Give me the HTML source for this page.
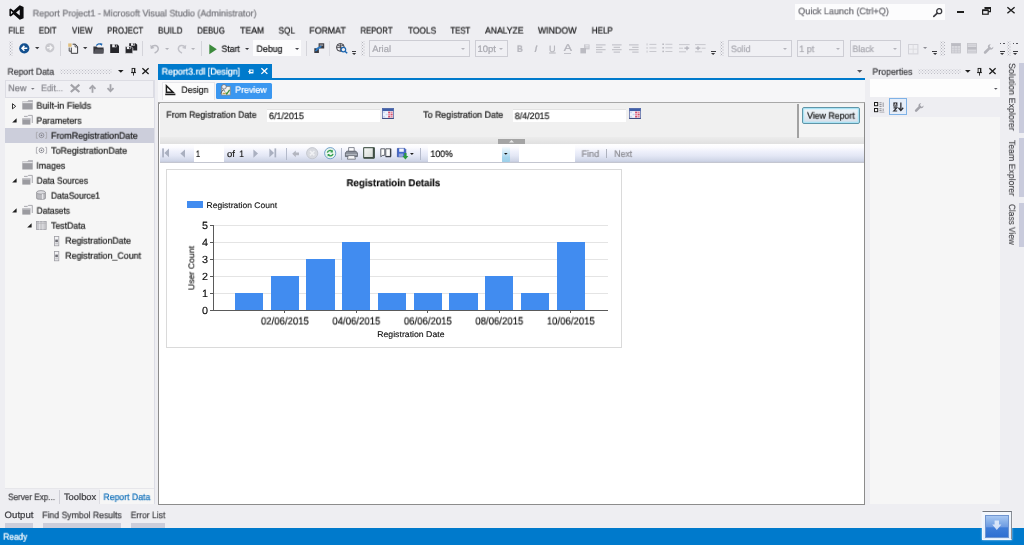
<!DOCTYPE html>
<html><head><meta charset="utf-8"><title>Report Project1 - Microsoft Visual Studio (Administrator)</title>
<style>
*{box-sizing:border-box;margin:0;padding:0}
html,body{width:1024px;height:545px;overflow:hidden;background:#eeeef2;font-family:"Liberation Sans",sans-serif;font-size:9px;color:#1e1e1e}
.a{position:absolute}
.t{position:absolute;white-space:nowrap;line-height:14px;height:14px;transform-origin:0 50%;will-change:transform;text-rendering:geometricPrecision;-webkit-text-stroke:0.24px}
svg{position:absolute;overflow:visible}
</style></head><body>
<!-- ===== title bar ===== -->
<svg style="left:8.8px;top:5px" width="15" height="15" viewBox="0 0 15.7 16"><path d="M11.3 0.2 L15.4 2 V14 L11.3 15.8 L4.7 9.8 L1.7 12.2 L0.3 11.5 V4.5 L1.7 3.8 L4.7 6.2 Z M11.3 4.7 L7.4 8 L11.3 11.3 Z M1.9 6.2 V9.8 L3.9 8 Z" fill="#0b0b0d" fill-rule="evenodd"/></svg>
<div class="t" style="left:32px;top:6px;font-size:9.3px;color:#77777d;transform:translate(0.70px,0.40px) scaleX(0.9697);">Report Project1 - Microsoft Visual Studio (Administrator)</div>
<div class="a" style="left:794.5px;top:3.5px;width:150px;height:16px;background:#fcfcfd;"></div>
<div class="t" style="left:798px;top:4px;font-size:9.3px;color:#6b6b72;transform:translate(0.20px,0.30px) scaleX(0.9768);">Quick Launch (Ctrl+Q)</div>
<svg style="left:932.5px;top:7.5px" width="10" height="9" viewBox="0 0 10 9"><circle cx="6.2" cy="3.2" r="2.5" fill="none" stroke="#3b3b40" stroke-width="1.3"/><path d="M4.3 5.1L0.8 8.4" stroke="#3b3b40" stroke-width="1.7" stroke-linecap="round"/></svg>
<div class="a" style="left:957px;top:11.2px;width:7.2px;height:2.1px;background:#1e1e1e;"></div>
<svg style="left:981.5px;top:7px" width="9" height="8" viewBox="0 0 9 8"><path d="M2.6 0.6H8.4V4.6H6.2" fill="none" stroke="#1e1e1e" stroke-width="1.2"/><path d="M2.6 1.1H8.4" stroke="#1e1e1e" stroke-width="1.8"/><rect x="0.6" y="3" width="5.6" height="4.2" fill="none" stroke="#1e1e1e" stroke-width="1.2"/><path d="M0.6 3.3H6.2" stroke="#1e1e1e" stroke-width="1.6"/></svg>
<svg style="left:1007.3px;top:7.3px" width="8" height="6.6" viewBox="0 0 8 6.6"><path d="M0.4 0.3L7.6 6.3M7.6 0.3L0.4 6.3" stroke="#1e1e1e" stroke-width="1.4"/></svg>
<!-- ===== menu ===== -->
<div class="t" style="left:8px;top:23px;font-size:9.3px;color:#202022;transform:translate(0.50px,0.60px) scaleX(0.8045);">FILE</div>
<div class="t" style="left:38px;top:23px;font-size:9.3px;color:#202022;transform:translate(0.80px,0.60px) scaleX(0.8354);">EDIT</div>
<div class="t" style="left:71px;top:23px;font-size:9.3px;color:#202022;transform:translate(0.90px,0.60px) scaleX(0.8626);">VIEW</div>
<div class="t" style="left:107px;top:23px;font-size:9.3px;color:#202022;transform:translate(0.20px,0.60px) scaleX(0.8274);">PROJECT</div>
<div class="t" style="left:158px;top:23px;font-size:9.3px;color:#202022;transform:translate(0.00px,0.60px) scaleX(0.8945);">BUILD</div>
<div class="t" style="left:197px;top:23px;font-size:9.3px;color:#202022;transform:translate(0.30px,0.60px) scaleX(0.8348);">DEBUG</div>
<div class="t" style="left:240px;top:23px;font-size:9.3px;color:#202022;transform:translate(0.00px,0.60px) scaleX(0.9370);">TEAM</div>
<div class="t" style="left:278px;top:23px;font-size:9.3px;color:#202022;transform:translate(0.50px,0.60px) scaleX(0.8813);">SQL</div>
<div class="t" style="left:309px;top:23px;font-size:9.3px;color:#202022;transform:translate(0.30px,0.60px) scaleX(0.9439);">FORMAT</div>
<div class="t" style="left:360px;top:23px;font-size:9.3px;color:#202022;transform:translate(0.50px,0.60px) scaleX(0.8295);">REPORT</div>
<div class="t" style="left:408px;top:23px;font-size:9.3px;color:#202022;transform:translate(0.00px,0.60px) scaleX(0.8961);">TOOLS</div>
<div class="t" style="left:450px;top:23px;font-size:9.3px;color:#202022;transform:translate(0.40px,0.60px) scaleX(0.8331);">TEST</div>
<div class="t" style="left:485px;top:23px;font-size:9.3px;color:#202022;transform:translate(0.00px,0.60px) scaleX(0.9235);">ANALYZE</div>
<div class="t" style="left:537px;top:23px;font-size:9.3px;color:#202022;transform:translate(0.90px,0.60px) scaleX(0.9486);">WINDOW</div>
<div class="t" style="left:591px;top:23px;font-size:9.3px;color:#202022;transform:translate(0.70px,0.60px) scaleX(0.8684);">HELP</div>
<!-- ===== main toolbar ===== -->
<div class="a" style="left:8.8px;top:41px;width:4.6px;height:15px;background-image:radial-gradient(circle,#b4b4bc 0.55px,transparent 0.8px),radial-gradient(circle,#b4b4bc 0.55px,transparent 0.8px);background-size:3px 3px;background-position:0 0,1.5px 1.5px"></div>
<svg style="left:18.5px;top:42.7px" width="10.6" height="10.6" viewBox="0 0 10.6 10.6"><circle cx="5.3" cy="5.3" r="5.1" fill="#13508f"/><path d="M8.3 5.3H3.2M5.4 2.9L3 5.3L5.4 7.7" fill="none" stroke="#fff" stroke-width="1.5"/></svg>
<svg style="left:34.8px;top:47.2px" width="4.4" height="2.2" viewBox="0 0 4.4 2.2"><path d="M0 0H4.4L2.2 2.2Z" fill="#3a3a3e"/></svg>
<svg style="left:44.6px;top:43.3px" width="9.6" height="9.6" viewBox="0 0 9.6 9.6"><circle cx="4.8" cy="4.8" r="4.6" fill="#c9c9ce"/><path d="M2 4.8H6.7M4.7 2.6L6.9 4.8L4.7 7" fill="none" stroke="#f4f4f6" stroke-width="1.4"/></svg>
<div class="a" style="left:60.3px;top:40.8px;width:1px;height:14.8px;background:#d4d4da;"></div>
<svg style="left:67.5px;top:43px" width="10.5" height="11" viewBox="0 0 10.5 11"><rect x="0.2" y="0.4" width="3.4" height="3.4" fill="#e2c07e"/><path d="M4.6 1.2H7.3L9.6 3.6V10.3H3.3V4.6" fill="#f4f4f6" stroke="#3c3c40" stroke-width="1"/><path d="M1.2 4.6V8.2H3.2" fill="none" stroke="#3c3c40" stroke-width="0.9"/><path d="M7.1 1.3V3.9H9.5" fill="none" stroke="#3c3c40" stroke-width="0.8"/></svg>
<svg style="left:83.4px;top:47.2px" width="4.4" height="2.2" viewBox="0 0 4.4 2.2"><path d="M0 0H4.4L2.2 2.2Z" fill="#3a3a3e"/></svg>
<svg style="left:93px;top:43px" width="11.2" height="11" viewBox="0 0 11.2 11"><path d="M0.4 3.4H3.6L4.6 4.6H10.6V10.6H0.4Z" fill="#34343a"/><path d="M2.2 6.3H10.9L9.6 10.6H0.6Z" fill="#55555c"/><path d="M3.4 2.6C4.6 0.6 6.8 0.4 8.4 1.6" fill="none" stroke="#1c66b2" stroke-width="1.3"/><path d="M6.9 0.1L9.6 0.7L8.5 3.1Z" fill="#1c66b2"/></svg>
<svg style="left:110px;top:44.2px" width="9.2" height="9.2" viewBox="0 0 9.2 9.2"><path d="M0.2 0.2H7.2L9 2V9H0.2Z" fill="#26262b"/><rect x="2.2" y="0.2" width="4.3" height="3.1" fill="#eeeef2"/><rect x="4.8" y="0.6" width="1.2" height="2.2" fill="#26262b"/></svg>
<svg style="left:125.4px;top:43.3px" width="12.4" height="10.6" viewBox="0 0 12.4 10.6"><path d="M4.2 0.2H10.6L12.2 1.8V7.6H4.2Z" fill="#26262b"/><rect x="6" y="0.2" width="3.8" height="2.5" fill="#eeeef2"/><rect x="8.3" y="0.5" width="1" height="1.8" fill="#26262b"/><path d="M0.2 3.6H6.2L7.8 5.2V10.4H0.2Z" fill="#26262b" stroke="#eeeef2" stroke-width="0.7"/><rect x="1.9" y="3.8" width="3.6" height="2.3" fill="#eeeef2"/><rect x="4" y="4.1" width="1" height="1.6" fill="#26262b"/></svg>
<div class="a" style="left:142.2px;top:40.8px;width:1px;height:14.8px;background:#d4d4da;"></div>
<svg style="left:150px;top:43.8px" width="9.6" height="9.6" viewBox="0 0 9.6 9.6"><path d="M1.2 3.6C3 0.6 7.6 0.8 8.2 4.2C8.5 6.4 6.6 8.2 4.6 9" fill="none" stroke="#b9b9c0" stroke-width="1.5"/><path d="M0.3 0.7L0.8 5L4.6 3.9Z" fill="#b9b9c0"/></svg>
<svg style="left:164.9px;top:47.75px" width="4.2" height="2.1" viewBox="0 0 4.2 2.1"><path d="M0 0H4.2L2.1 2.1Z" fill="#b4b4bb"/></svg>
<svg style="left:176.6px;top:43.8px" width="9.6" height="9.6" viewBox="0 0 9.6 9.6"><path d="M8.4 3.6C6.6 0.6 2 0.8 1.4 4.2C1.1 6.4 3 8.2 5 9" fill="none" stroke="#c3c3ca" stroke-width="1.5"/><path d="M9.3 0.7L8.8 5L5 3.9Z" fill="#c3c3ca"/></svg>
<svg style="left:190.9px;top:47.75px" width="4.2" height="2.1" viewBox="0 0 4.2 2.1"><path d="M0 0H4.2L2.1 2.1Z" fill="#b4b4bb"/></svg>
<div class="a" style="left:200.7px;top:40.8px;width:1px;height:14.8px;background:#d4d4da;"></div>
<svg style="left:209px;top:43.6px" width="8" height="10.4" viewBox="0 0 8 10.4"><path d="M0.3 0.2L7.8 5.2L0.3 10.2Z" fill="#3c8a3c"/></svg>
<div class="t" style="left:221px;top:41px;font-size:9.3px;color:#202022;transform:translate(0.50px,0.90px) scaleX(0.9317);">Start</div>
<svg style="left:244.7px;top:47.75px" width="4.2" height="2.1" viewBox="0 0 4.2 2.1"><path d="M0 0H4.2L2.1 2.1Z" fill="#3a3a3e"/></svg>
<div class="a" style="left:253px;top:40px;width:48px;height:16.4px;background:#fcfcfd;"></div>
<div class="t" style="left:256px;top:41px;font-size:9.3px;color:#202022;transform:translate(0.50px,0.90px) scaleX(0.9487);">Debug</div>
<svg style="left:294.7px;top:47.75px" width="4.2" height="2.1" viewBox="0 0 4.2 2.1"><path d="M0 0H4.2L2.1 2.1Z" fill="#4a4a50"/></svg>
<div class="a" style="left:305.6px;top:40.8px;width:1px;height:14.8px;background:#d4d4da;"></div>
<svg style="left:314px;top:43px" width="10.5" height="10.5" viewBox="0 0 10.5 10.5"><rect x="4.6" y="0.3" width="5.6" height="5.2" fill="#3a3a40"/><rect x="5.6" y="1.6" width="3.6" height="0.9" fill="#d8d8de"/><rect x="0.3" y="5.2" width="4.6" height="4.8" fill="#3a3a40"/><path d="M2 6.2L7.4 3.2" stroke="#2f7ac2" stroke-width="1.6"/><path d="M1.4 8L4.4 5.6" stroke="#2f7ac2" stroke-width="1.4"/></svg>
<div class="a" style="left:329px;top:40.8px;width:1px;height:14.8px;background:#dcdce2;"></div>
<svg style="left:335.5px;top:43px" width="11.6" height="10.6" viewBox="0 0 11.6 10.6"><circle cx="4.4" cy="4.4" r="3.9" fill="#e8e8ee" stroke="#3a3a40" stroke-width="1"/><path d="M0.6 4.4H8.2M4.4 0.6V8.2M1.6 2.2C3.4 3.2 5.4 3.2 7.2 2.2" fill="none" stroke="#3a3a40" stroke-width="0.8"/><circle cx="7.4" cy="6.6" r="2.3" fill="#eeeef2" stroke="#1c66b2" stroke-width="1.2"/><path d="M9 8.3L11.2 10.3" stroke="#1c66b2" stroke-width="1.5"/></svg>
<div class="a" style="left:351.6px;top:50.6px;width:4.8px;height:1px;background:#3a3a3e;"></div>
<svg style="left:351.9px;top:52.55px" width="4.2" height="2.1" viewBox="0 0 4.2 2.1"><path d="M0 0H4.2L2.1 2.1Z" fill="#3a3a3e"/></svg>
<div class="a" style="left:360.6px;top:41px;width:4px;height:15px;background-image:radial-gradient(circle,#b4b4bc 0.55px,transparent 0.8px),radial-gradient(circle,#b4b4bc 0.55px,transparent 0.8px);background-size:3px 3px;background-position:0 0,1.5px 1.5px"></div>
<div class="a" style="left:369.3px;top:40.4px;width:100.4px;height:16.4px;background:#f0f0f4;border:1px solid #cdcdd4"></div><div class="t" style="left:372px;top:42px;font-size:9.3px;color:#a9a9b0;transform:translate(0.20px,0.10px) scaleX(1.0102);">Arial</div><svg style="left:461.2px;top:47.8px" width="4" height="2" viewBox="0 0 4 2"><path d="M0 0H4L2 2Z" fill="#b4b4bb"/></svg>
<div class="a" style="left:475px;top:40.4px;width:32.6px;height:16.4px;background:#f0f0f4;border:1px solid #cdcdd4"></div><div class="t" style="left:477px;top:42px;font-size:9.3px;color:#a9a9b0;transform:translate(0.50px,0.10px) scaleX(1.0216);">10pt</div><svg style="left:499.1px;top:47.8px" width="4" height="2" viewBox="0 0 4 2"><path d="M0 0H4L2 2Z" fill="#b4b4bb"/></svg>
<div class="t" style="left:517px;top:41px;font-size:9.4px;color:#b3b3ba;font-weight:700;transform:translate(0.00px,0.90px) scaleX(0.8553);">B</div>
<div class="t" style="left:534px;top:41px;font-size:9.4px;color:#b3b3ba;transform:translate(0.30px,0.90px) scaleX(1.2263);font-style:italic;">I</div>
<div class="t" style="left:549px;top:41px;font-size:9px;color:#b3b3ba;transform:translate(0.10px,0.50px) scaleX(1.0154);text-decoration:underline;">U</div>
<div class="t" style="left:563px;top:42px;font-size:10px;color:#b3b3ba;transform:translate(0.70px,0.30px) scaleX(1.2290);">A</div>
<div class="a" style="left:564.4px;top:53.2px;width:6.8px;height:1.3px;background:#c2c2c9;"></div>
<svg style="left:579.6px;top:43.6px" width="10" height="10" viewBox="0 0 10 10"><rect x="4" y="0.4" width="5.6" height="5" fill="#c9c9cf"/><rect x="0.4" y="4" width="5.6" height="5.4" fill="#bbbbc2"/><path d="M5.4 1.6H8.6M5.4 3H8.6" stroke="#eeeef2" stroke-width="0.7"/></svg>
<svg style="left:595.6px;top:43.6px" width="10" height="10" viewBox="0 0 10 10"><rect x="0" y="0.4" width="9.6" height="1" fill="#bcbcc3"/><rect x="0" y="2.8" width="6.4" height="1" fill="#bcbcc3"/><rect x="0" y="5.2" width="9.6" height="1" fill="#bcbcc3"/><rect x="0" y="7.6" width="6.4" height="1" fill="#bcbcc3"/></svg>
<svg style="left:612.2px;top:43.6px" width="10" height="10" viewBox="0 0 10 10"><rect x="0" y="0.4" width="9.6" height="1" fill="#bcbcc3"/><rect x="1.6" y="2.8" width="6.4" height="1" fill="#bcbcc3"/><rect x="0" y="5.2" width="9.6" height="1" fill="#bcbcc3"/><rect x="1.6" y="7.6" width="6.4" height="1" fill="#bcbcc3"/></svg>
<svg style="left:628.6px;top:43.6px" width="10" height="10" viewBox="0 0 10 10"><rect x="0" y="0.4" width="9.6" height="1" fill="#bcbcc3"/><rect x="3.2" y="2.8" width="6.4" height="1" fill="#bcbcc3"/><rect x="0" y="5.2" width="9.6" height="1" fill="#bcbcc3"/><rect x="3.2" y="7.6" width="6.4" height="1" fill="#bcbcc3"/></svg>
<svg style="left:646px;top:43.4px" width="10.6" height="10.6" viewBox="0 0 10.6 10.6"><rect x="0.6" y="0.4" width="0.9" height="2" fill="#c4c4ca"/><rect x="3.4" y="0.9" width="7" height="0.9" fill="#c4c4ca"/><rect x="0.6" y="4" width="0.9" height="2" fill="#c4c4ca"/><rect x="3.4" y="4.5" width="7" height="0.9" fill="#c4c4ca"/><rect x="0.6" y="7.6" width="0.9" height="2" fill="#c4c4ca"/><rect x="3.4" y="8.1" width="7" height="0.9" fill="#c4c4ca"/></svg>
<svg style="left:662px;top:43.4px" width="10.6" height="10.6" viewBox="0 0 10.6 10.6"><rect x="0.4" y="0.5" width="1.5" height="1.5" fill="#b4b4bb"/><rect x="3.4" y="0.8" width="7" height="0.9" fill="#c4c4ca"/><rect x="0.4" y="4.1" width="1.5" height="1.5" fill="#b4b4bb"/><rect x="3.4" y="4.4" width="7" height="0.9" fill="#c4c4ca"/><rect x="0.4" y="7.7" width="1.5" height="1.5" fill="#b4b4bb"/><rect x="3.4" y="8" width="7" height="0.9" fill="#c4c4ca"/></svg>
<svg style="left:679.4px;top:44.4px" width="11" height="9" viewBox="0 0 11 9"><path d="M0 0.6H10.6M0 7.8H7" stroke="#c4c4ca" stroke-width="0.9"/><path d="M0 4.2H4" stroke="#c4c4ca" stroke-width="0.9"/><path d="M5.4 4.2H10.2M8 2.2V6.2" stroke="#b0b0b8" stroke-width="1.2"/></svg>
<svg style="left:694.6px;top:44.4px" width="11" height="9" viewBox="0 0 11 9"><path d="M0 0.6H10.6M0 7.8H7" stroke="#c4c4ca" stroke-width="0.9"/><path d="M6.6 4.2H10.6" stroke="#c4c4ca" stroke-width="0.9"/><path d="M0.6 4.2H5.4M3 2.2V6.2" stroke="#b0b0b8" stroke-width="1.2"/></svg>
<div class="a" style="left:711px;top:51px;width:4.8px;height:1px;background:#3a3a3e;"></div>
<svg style="left:711.3px;top:52.95px" width="4.2" height="2.1" viewBox="0 0 4.2 2.1"><path d="M0 0H4.2L2.1 2.1Z" fill="#3a3a3e"/></svg>
<div class="a" style="left:719.6px;top:41px;width:4px;height:15px;background-image:radial-gradient(circle,#b4b4bc 0.55px,transparent 0.8px),radial-gradient(circle,#b4b4bc 0.55px,transparent 0.8px);background-size:3px 3px;background-position:0 0,1.5px 1.5px"></div>
<div class="a" style="left:728px;top:40.4px;width:63.6px;height:16.4px;background:#f0f0f4;border:1px solid #cdcdd4"></div><div class="t" style="left:730px;top:42px;font-size:9.3px;color:#a9a9b0;transform:translate(0.90px,0.10px) scaleX(0.9474);">Solid</div><svg style="left:783.1px;top:47.8px" width="4" height="2" viewBox="0 0 4 2"><path d="M0 0H4L2 2Z" fill="#b4b4bb"/></svg>
<div class="a" style="left:796.6px;top:40.4px;width:47.6px;height:16.4px;background:#f0f0f4;border:1px solid #cdcdd4"></div><div class="t" style="left:799px;top:42px;font-size:9.3px;color:#a9a9b0;transform:translate(0.30px,0.10px) scaleX(0.9539);">1 pt</div><svg style="left:835.7px;top:47.8px" width="4" height="2" viewBox="0 0 4 2"><path d="M0 0H4L2 2Z" fill="#b4b4bb"/></svg>
<div class="a" style="left:849.6px;top:40.4px;width:51.4px;height:16.4px;background:#f0f0f4;border:1px solid #cdcdd4"></div><div class="t" style="left:852px;top:42px;font-size:9.3px;color:#a9a9b0;transform:translate(0.50px,0.10px) scaleX(0.9413);">Black</div><svg style="left:892.5px;top:47.8px" width="4" height="2" viewBox="0 0 4 2"><path d="M0 0H4L2 2Z" fill="#b4b4bb"/></svg>
<svg style="left:907.6px;top:43.6px" width="10.4" height="10.4" viewBox="0 0 10.4 10.4"><rect x="0.5" y="0.5" width="9.4" height="9.4" fill="none" stroke="#d2d2d8" stroke-width="1"/><path d="M5.2 0.5V9.9M0.5 5.2H9.9" stroke="#dadae0" stroke-width="0.9"/></svg>
<svg style="left:923.3px;top:47.35px" width="4.2" height="2.1" viewBox="0 0 4.2 2.1"><path d="M0 0H4.2L2.1 2.1Z" fill="#8e8e96"/></svg>
<div class="a" style="left:932.4px;top:51px;width:4.8px;height:1px;background:#3a3a3e;"></div>
<svg style="left:932.7px;top:52.95px" width="4.2" height="2.1" viewBox="0 0 4.2 2.1"><path d="M0 0H4.2L2.1 2.1Z" fill="#3a3a3e"/></svg>
<div class="a" style="left:939.6px;top:41px;width:5px;height:15px;background-image:radial-gradient(circle,#b4b4bc 0.55px,transparent 0.8px),radial-gradient(circle,#b4b4bc 0.55px,transparent 0.8px);background-size:3px 3px;background-position:0 0,1.5px 1.5px"></div>
<svg style="left:950.6px;top:43.4px" width="10" height="10.4" viewBox="0 0 10 10.4"><rect x="0.4" y="0.4" width="9.2" height="9.6" fill="#d9d9de" stroke="#c3c3c9" stroke-width="0.8"/><rect x="0.4" y="0.4" width="9.2" height="2.6" fill="#bcbcc3"/><path d="M3.4 3V10M6.6 3V10M0.4 5.4H9.6M0.4 7.8H9.6" stroke="#c6c6cc" stroke-width="0.6"/></svg>
<svg style="left:966.8px;top:43.4px" width="10" height="10.4" viewBox="0 0 10 10.4"><rect x="0.4" y="0.4" width="9.2" height="9.6" fill="#d9d9de" stroke="#c3c3c9" stroke-width="0.8"/><rect x="0.4" y="4" width="9.2" height="2.6" fill="#bcbcc3"/><path d="M0.4 2.2H9.6M0.4 8.4H9.6" stroke="#c6c6cc" stroke-width="0.6"/></svg>
<svg style="left:984px;top:43.8px" width="9.6" height="9.6" viewBox="0 0 9.6 9.6"><path d="M1.1 8.5L5 4.6" stroke="#b4b4bb" stroke-width="2.6" stroke-linecap="round"/><path d="M6.8 0.3C4.8 0 3.4 1.8 4 3.6L6 5.6C7.8 6.2 9.6 4.8 9.3 2.8L7.4 4.2L5.4 2.2Z" fill="#b4b4bb"/></svg>
<div class="a" style="left:1000px;top:42.6px;width:1.2px;height:1.6px;background:#55555c;"></div>
<div class="a" style="left:1003.4px;top:42.6px;width:1.2px;height:1.6px;background:#55555c;"></div>
<div class="a" style="left:999.8px;top:51px;width:4.8px;height:1px;background:#3a3a3e;"></div>
<svg style="left:1000.1px;top:52.95px" width="4.2" height="2.1" viewBox="0 0 4.2 2.1"><path d="M0 0H4.2L2.1 2.1Z" fill="#3a3a3e"/></svg>
<div class="a" style="left:1013px;top:42.6px;width:1.2px;height:1.6px;background:#55555c;"></div>
<div class="a" style="left:1016.4px;top:42.6px;width:1.2px;height:1.6px;background:#55555c;"></div>
<div class="a" style="left:1012.8px;top:51px;width:4.8px;height:1px;background:#3a3a3e;"></div>
<svg style="left:1013.1px;top:52.95px" width="4.2" height="2.1" viewBox="0 0 4.2 2.1"><path d="M0 0H4.2L2.1 2.1Z" fill="#3a3a3e"/></svg>
<div class="a" style="left:1007px;top:41px;width:4.4px;height:15px;background-image:radial-gradient(circle,#b4b4bc 0.55px,transparent 0.8px),radial-gradient(circle,#b4b4bc 0.55px,transparent 0.8px);background-size:3px 3px;background-position:0 0,1.5px 1.5px"></div>
<!-- ===== Report Data tool window ===== -->
<div class="a" style="left:4.7px;top:79.5px;width:149.5px;height:424.6px;background:#f6f6f6;"></div>
<div class="a" style="left:154.2px;top:79.5px;width:1px;height:424.6px;background:#dcdde6;"></div>
<div class="t" style="left:7px;top:64px;font-size:9.3px;color:#3e3e42;transform:translate(0.50px,0.70px) scaleX(0.9294);">Report Data</div>
<div class="a" style="left:60px;top:69px;width:52px;height:5.4px;background-image:radial-gradient(circle,#c0c0c8 0.55px,transparent 0.8px),radial-gradient(circle,#c0c0c8 0.55px,transparent 0.8px);background-size:3px 3px;background-position:0 0,1.5px 1.5px"></div>
<svg style="left:117.9px;top:69.8px" width="5.6" height="2.8" viewBox="0 0 5.6 2.8"><path d="M0 0H5.6L2.8 2.8Z" fill="#1e1e1e"/></svg>
<svg style="left:130.8px;top:67.8px" width="5" height="7.8" viewBox="0 0 5 7.8"><rect x="1.1" y="0.4" width="2.8" height="4" fill="#f0f0f2" stroke="#1e1e1e" stroke-width="0.9"/><rect x="3" y="0.4" width="1" height="4" fill="#1e1e1e"/><path d="M0 4.6H5" stroke="#1e1e1e" stroke-width="0.9"/><path d="M2.5 4.8V7.6" stroke="#1e1e1e" stroke-width="0.9"/></svg>
<svg style="left:141.9px;top:68px" width="7" height="6.4" viewBox="0 0 7 6.4"><path d="M0.4 0.3L6.6 6.1M6.6 0.3L0.4 6.1" stroke="#1e1e1e" stroke-width="1.3"/></svg>
<div class="a" style="left:4.7px;top:79.5px;width:149.5px;height:18.2px;background:#f0f0f4;border:1px solid #dcdce3"></div>
<div class="t" style="left:8px;top:81px;font-size:9.3px;color:#7d7d84;transform:translate(0.30px,0.20px) scaleX(0.9673);">New</div>
<svg style="left:31px;top:87.5px" width="3.6" height="1.8" viewBox="0 0 3.6 1.8"><path d="M0 0H3.6L1.8 1.8Z" fill="#77777e"/></svg>
<div class="t" style="left:41px;top:81px;font-size:9.3px;color:#8d8d94;transform:translate(0.10px,0.20px) scaleX(0.9209);">Edit...</div>
<svg style="left:70.3px;top:84.2px" width="10.2" height="8.6" viewBox="0 0 10.2 8.6"><path d="M0.8 0.6L9.4 8M9.4 0.6L0.8 8" stroke="#a2a2a8" stroke-width="2.2"/></svg>
<svg style="left:89px;top:85px" width="7" height="8" viewBox="0 0 7 8"><path d="M3.5 1V7.8" stroke="#a6a6ac" stroke-width="1.8"/><path d="M0.5 3.8L3.5 0.8L6.5 3.8" fill="none" stroke="#a6a6ac" stroke-width="1.8"/></svg>
<svg style="left:106.7px;top:83.6px" width="7" height="8" viewBox="0 0 7 8"><path d="M3.5 0.2V7" stroke="#a6a6ac" stroke-width="1.8"/><path d="M0.5 4.2L3.5 7.2L6.5 4.2" fill="none" stroke="#a6a6ac" stroke-width="1.8"/></svg>
<div class="a" style="left:4.7px;top:128px;width:149.5px;height:14.6px;background:#cccedb;"></div>
<div class="t" style="left:36px;top:98px;font-size:9.3px;color:#1e1e1e;transform:translate(0.40px,0.70px) scaleX(0.9801);">Built-in Fields</div>
<div class="t" style="left:36px;top:113px;font-size:9.3px;color:#1e1e1e;transform:translate(0.40px,0.70px) scaleX(0.9384);">Parameters</div>
<div class="t" style="left:51px;top:128px;font-size:9.3px;color:#1e1e1e;transform:translate(0.00px,0.70px) scaleX(0.9534);">FromRegistrationDate</div>
<div class="t" style="left:51px;top:143px;font-size:9.3px;color:#1e1e1e;transform:translate(0.00px,0.70px) scaleX(0.9623);">ToRegistrationDate</div>
<div class="t" style="left:36px;top:158px;font-size:9.3px;color:#1e1e1e;transform:translate(0.40px,0.70px) scaleX(0.9475);">Images</div>
<div class="t" style="left:36px;top:173px;font-size:9.3px;color:#1e1e1e;transform:translate(0.60px,0.70px) scaleX(0.9125);">Data Sources</div>
<div class="t" style="left:51px;top:188px;font-size:9.3px;color:#1e1e1e;transform:translate(0.00px,0.70px) scaleX(0.9030);">DataSource1</div>
<div class="t" style="left:36px;top:203px;font-size:9.3px;color:#1e1e1e;transform:translate(0.60px,0.70px) scaleX(0.9100);">Datasets</div>
<div class="t" style="left:51px;top:218px;font-size:9.3px;color:#1e1e1e;transform:translate(0.00px,0.70px) scaleX(0.9400);">TestData</div>
<div class="t" style="left:65px;top:233px;font-size:9.3px;color:#1e1e1e;transform:translate(0.20px,0.70px) scaleX(0.9502);">RegistrationDate</div>
<div class="t" style="left:65px;top:248px;font-size:9.3px;color:#1e1e1e;transform:translate(0.20px,0.70px) scaleX(0.9523);">Registration_Count</div>
<svg style="left:12.4px;top:102.9px" width="4.4" height="6.6" viewBox="0 0 4.4 6.6"><path d="M0.5 0.7L3.7 3.3L0.5 5.9Z" fill="#f5f5f5" stroke="#1e1e1e" stroke-width="0.9"/></svg>
<svg style="left:12.4px;top:118px" width="5" height="5" viewBox="0 0 5 5"><path d="M4.6 0.2V4.6H0.2Z" fill="#1e1e1e"/></svg>
<svg style="left:12.4px;top:178px" width="5" height="5" viewBox="0 0 5 5"><path d="M4.6 0.2V4.6H0.2Z" fill="#1e1e1e"/></svg>
<svg style="left:12.4px;top:208px" width="5" height="5" viewBox="0 0 5 5"><path d="M4.6 0.2V4.6H0.2Z" fill="#1e1e1e"/></svg>
<svg style="left:27px;top:223px" width="5" height="5" viewBox="0 0 5 5"><path d="M4.6 0.2V4.6H0.2Z" fill="#1e1e1e"/></svg>
<svg style="left:21.6px;top:100px" width="11" height="10" viewBox="0 0 11 10"><path d="M0.3 1.5H5.4L6.6 0.2H10.7V9.4H0.3Z" fill="#9d9da2"/><path d="M0.3 1.9H10.7V3.2H0.3Z" fill="#e3e3e6"/><path d="M5.6 1.7L6.8 0.3H10.7V1.7Z" fill="#bdbdc2"/></svg>
<svg style="left:21.6px;top:115px" width="11" height="10" viewBox="0 0 11 10"><path d="M2 1.4H5.4L6.4 0.4H10.3V8" fill="#f1f1f3" stroke="#a3a3a8" stroke-width="0.9"/><path d="M0.3 3.4H8.4V9.6H0.3Z" fill="#9b9ba0"/><path d="M0.3 3.4H8.4V4.6H0.3Z" fill="#c6c6ca"/></svg>
<svg style="left:21.6px;top:160px" width="11" height="10" viewBox="0 0 11 10"><path d="M0.3 1.5H5.4L6.6 0.2H10.7V9.4H0.3Z" fill="#9d9da2"/><path d="M0.3 1.9H10.7V3.2H0.3Z" fill="#e3e3e6"/><path d="M5.6 1.7L6.8 0.3H10.7V1.7Z" fill="#bdbdc2"/></svg>
<svg style="left:21.6px;top:175px" width="11" height="10" viewBox="0 0 11 10"><path d="M2 1.4H5.4L6.4 0.4H10.3V8" fill="#f1f1f3" stroke="#a3a3a8" stroke-width="0.9"/><path d="M0.3 3.4H8.4V9.6H0.3Z" fill="#9b9ba0"/><path d="M0.3 3.4H8.4V4.6H0.3Z" fill="#c6c6ca"/></svg>
<svg style="left:21.6px;top:205px" width="11" height="10" viewBox="0 0 11 10"><path d="M2 1.4H5.4L6.4 0.4H10.3V8" fill="#f1f1f3" stroke="#a3a3a8" stroke-width="0.9"/><path d="M0.3 3.4H8.4V9.6H0.3Z" fill="#9b9ba0"/><path d="M0.3 3.4H8.4V4.6H0.3Z" fill="#c6c6ca"/></svg>
<svg style="left:36px;top:132.2px" width="11" height="6.6" viewBox="0 0 11 6.6"><path d="M1.8 0.3H0.4V6.3H1.8M9.2 0.3H10.6V6.3H9.2" fill="none" stroke="#a9a9af" stroke-width="0.9"/><circle cx="5.5" cy="3.3" r="2.4" fill="none" stroke="#8f8f96" stroke-width="0.9"/><circle cx="5.5" cy="3.3" r="0.9" fill="#7c7c84"/></svg>
<svg style="left:36px;top:147.2px" width="11" height="6.6" viewBox="0 0 11 6.6"><path d="M1.8 0.3H0.4V6.3H1.8M9.2 0.3H10.6V6.3H9.2" fill="none" stroke="#a9a9af" stroke-width="0.9"/><circle cx="5.5" cy="3.3" r="2.4" fill="none" stroke="#8f8f96" stroke-width="0.9"/><circle cx="5.5" cy="3.3" r="0.9" fill="#7c7c84"/></svg>
<svg style="left:36.3px;top:190.2px" width="10" height="10.4" viewBox="0 0 10 10.4"><path d="M0.6 2.4V8.4C0.6 9.6 9.4 9.6 9.4 8.4V2.4" fill="#b9b9be" stroke="#8e8e94" stroke-width="0.8"/><ellipse cx="5" cy="2.4" rx="4.4" ry="1.8" fill="#dcdce0" stroke="#8e8e94" stroke-width="0.8"/><path d="M6.6 4V9" stroke="#e6e6ea" stroke-width="1.4"/></svg>
<svg style="left:36.3px;top:221px" width="10.6" height="9" viewBox="0 0 10.6 9"><rect x="0.4" y="0.4" width="9.8" height="8.2" fill="#c9c9cd" stroke="#a2a2a8" stroke-width="0.8"/><path d="M3.6 0.4V8.6M6.9 0.4V8.6" stroke="#e9e9ec" stroke-width="0.8"/><path d="M0.4 2.2H10.2" stroke="#b1b1b6" stroke-width="0.8"/></svg>
<svg style="left:53.8px;top:235.9px" width="5.2" height="10.2" viewBox="0 0 5.2 10.2"><rect x="0.4" y="0.4" width="4.4" height="9.4" fill="#f2f2f4" stroke="#9d9da3" stroke-width="0.8"/><rect x="1.3" y="3.6" width="2.6" height="2.6" fill="#6e6e75"/><path d="M1.2 7.8H4" stroke="#a5a5ab" stroke-width="0.8"/></svg>
<svg style="left:53.8px;top:250.9px" width="5.2" height="10.2" viewBox="0 0 5.2 10.2"><rect x="0.4" y="0.4" width="4.4" height="9.4" fill="#f2f2f4" stroke="#9d9da3" stroke-width="0.8"/><rect x="1.3" y="3.6" width="2.6" height="2.6" fill="#6e6e75"/><path d="M1.2 7.8H4" stroke="#a5a5ab" stroke-width="0.8"/></svg>
<div class="a" style="left:4.7px;top:489px;width:95.3px;height:15.2px;background:#eeeef2;"></div>
<div class="a" style="left:4.7px;top:488.4px;width:149.5px;height:0.8px;background:#e6e6ea;"></div>
<div class="a" style="left:59.2px;top:490px;width:0.8px;height:14px;background:#cfcfd6;"></div>
<div class="a" style="left:99.4px;top:490px;width:0.8px;height:14px;background:#dcdce2;"></div>
<div class="t" style="left:8px;top:490px;font-size:9.3px;color:#3e3e42;transform:translate(0.10px,0.10px) scaleX(0.8728);">Server Exp...</div>
<div class="t" style="left:63px;top:490px;font-size:9.3px;color:#3e3e42;transform:translate(0.90px,0.10px) scaleX(1.0110);">Toolbox</div>
<div class="t" style="left:103px;top:490px;font-size:9.3px;color:#1573bb;transform:translate(0.40px,0.10px) scaleX(0.9354);">Report Data</div>
<!-- ===== document well ===== -->
<div class="a" style="left:158.2px;top:64.1px;width:113.9px;height:14px;background:#007acc;"></div>
<div class="a" style="left:158.2px;top:77.8px;width:707.2px;height:1.8px;background:#007acc;"></div>
<div class="t" style="left:161px;top:64px;font-size:9.3px;color:#ffffff;transform:translate(0.70px,0.60px) scaleX(0.9481);">Report3.rdl [Design]</div>
<svg style="left:248.4px;top:68.6px" width="6" height="5.4" viewBox="0 0 6 5.4"><rect x="2" y="1" width="3" height="3" fill="none" stroke="#fff" stroke-width="0.9"/><rect x="2" y="3" width="3" height="1" fill="#fff"/><path d="M1.6 0.4V5M0 2.7H1.6" stroke="#fff" stroke-width="0.9"/></svg>
<svg style="left:261.2px;top:68px" width="6.8" height="6.2" viewBox="0 0 6.8 6.2"><path d="M0.4 0.3L6.4 5.9M6.4 0.3L0.4 5.9" stroke="#fff" stroke-width="1.3"/></svg>
<svg style="left:856.9px;top:70.25px" width="5.4" height="2.7" viewBox="0 0 5.4 2.7"><path d="M0 0H5.4L2.7 2.7Z" fill="#55555c"/></svg>
<div class="a" style="left:158.2px;top:79.6px;width:707.2px;height:22px;background:#f6f6f8;"></div>
<div class="a" style="left:161.6px;top:82px;width:53.8px;height:18px;background:#fcfcfc;border:1px solid #e6e6ea;border-bottom:none"></div>
<svg style="left:164.7px;top:85px" width="11" height="10.2" viewBox="0 0 11 10.2"><path d="M1.4 0.8V7.2H8Z" fill="none" stroke="#1e1e1e" stroke-width="1.5"/><path d="M0.2 9.4H10.4" stroke="#1e1e1e" stroke-width="1.7"/></svg>
<div class="t" style="left:181px;top:82px;font-size:9.3px;color:#1e1e1e;transform:translate(0.40px,0.90px) scaleX(0.9325);">Design</div>
<div class="a" style="left:216px;top:83px;width:55.8px;height:16.4px;background:#3a97f0;border-radius:1.5px"></div>
<svg style="left:219.8px;top:84px" width="11" height="11.6" viewBox="0 0 11 11.6"><rect x="1.6" y="2.4" width="8.6" height="8.6" fill="#f3f3ee" stroke="#8a8a86" stroke-width="0.8"/><circle cx="4" cy="2.8" r="2.3" fill="#e8ecf2" stroke="#6b6f7a" stroke-width="0.8"/><path d="M0.6 9.6L3 5.6L5.2 7.6" fill="none" stroke="#555a66" stroke-width="0.9"/><path d="M5.6 8.6L6.8 10L9.6 6" fill="none" stroke="#3f8f3f" stroke-width="1.3"/><path d="M2.6 9.4H5.4" stroke="#c9a24a" stroke-width="1.2"/></svg>
<div class="t" style="left:235px;top:82px;font-size:9.3px;color:#ffffff;transform:translate(0.20px,0.90px) scaleX(0.9523);">Preview</div>
<div class="a" style="left:158.2px;top:102.2px;width:707.1px;height:402.5px;background:#ffffff;border:1px solid #8c8c8c;border-top:2px solid #a8a8a8"></div>
<div class="a" style="left:160.2px;top:103.4px;width:704.2px;height:34px;background:#f0f0f0;"></div>
<div class="a" style="left:160.2px;top:137.3px;width:704.2px;height:6.8px;background:linear-gradient(#ececec,#e0e0e0);"></div>
<div class="a" style="left:160.2px;top:144px;width:704.2px;height:18.6px;background:linear-gradient(#ffffff 0%,#fbfbfe 18%,#eef0fb 40%,#e3e7f5 62%,#ced4e6 90%,#b8bece 100%);"></div>
<div class="t" style="left:166px;top:107px;font-size:9.3px;color:#1e1e1e;transform:translate(0.30px,0.80px) scaleX(0.9385);">From Registration Date</div>
<div class="a" style="left:266.7px;top:108.8px;width:113px;height:13.6px;background:#ffffff;border-top:1px solid #e3e3e3"></div>
<div class="t" style="left:268px;top:109px;font-size:9.3px;color:#1e1e1e;transform:translate(0.90px,0.10px) scaleX(0.9668);">6/1/2015</div>
<svg style="left:382.3px;top:108px" width="12" height="11" viewBox="0 0 12 11"><rect x="0.4" y="0.4" width="11.2" height="10.2" fill="#f7f8fc" stroke="#5f6fa6" stroke-width="0.8"/><rect x="0.4" y="0.4" width="11.2" height="2.7" fill="#3f5fa8"/><rect x="0.4" y="9.9" width="11.2" height="0.9" fill="#2d3d74"/><rect x="1.1" y="3.6" width="2.1" height="1.7" fill="#c7d6f2"/><rect x="3.6" y="3.6" width="2.1" height="1.7" fill="#eef2fb"/><rect x="6.1" y="3.6" width="2.1" height="1.7" fill="#d4506e"/><rect x="8.6" y="3.6" width="2.1" height="1.7" fill="#e58a9e"/><rect x="1.1" y="5.7" width="2.1" height="1.7" fill="#eef2fb"/><rect x="3.6" y="5.7" width="2.1" height="1.7" fill="#c7d6f2"/><rect x="6.1" y="5.7" width="2.1" height="1.7" fill="#e58a9e"/><rect x="8.6" y="5.7" width="2.1" height="1.7" fill="#d4506e"/><rect x="1.1" y="7.8" width="2.1" height="1.7" fill="#c7d6f2"/><rect x="3.6" y="7.8" width="2.1" height="1.7" fill="#eef2fb"/><rect x="6.1" y="7.8" width="2.1" height="1.7" fill="#d4506e"/><rect x="8.6" y="7.8" width="2.1" height="1.7" fill="#e58a9e"/></svg>
<div class="t" style="left:423px;top:107px;font-size:9.3px;color:#1e1e1e;transform:translate(0.10px,0.80px) scaleX(0.9521);">To Registration Date</div>
<div class="a" style="left:512.7px;top:108.8px;width:113.6px;height:13.6px;background:#ffffff;border-top:1px solid #e3e3e3"></div>
<div class="t" style="left:514px;top:109px;font-size:9.3px;color:#1e1e1e;transform:translate(0.70px,0.10px) scaleX(0.9612);">8/4/2015</div>
<svg style="left:628.5px;top:108px" width="12" height="11" viewBox="0 0 12 11"><rect x="0.4" y="0.4" width="11.2" height="10.2" fill="#f7f8fc" stroke="#5f6fa6" stroke-width="0.8"/><rect x="0.4" y="0.4" width="11.2" height="2.7" fill="#3f5fa8"/><rect x="0.4" y="9.9" width="11.2" height="0.9" fill="#2d3d74"/><rect x="1.1" y="3.6" width="2.1" height="1.7" fill="#c7d6f2"/><rect x="3.6" y="3.6" width="2.1" height="1.7" fill="#eef2fb"/><rect x="6.1" y="3.6" width="2.1" height="1.7" fill="#d4506e"/><rect x="8.6" y="3.6" width="2.1" height="1.7" fill="#e58a9e"/><rect x="1.1" y="5.7" width="2.1" height="1.7" fill="#eef2fb"/><rect x="3.6" y="5.7" width="2.1" height="1.7" fill="#c7d6f2"/><rect x="6.1" y="5.7" width="2.1" height="1.7" fill="#e58a9e"/><rect x="8.6" y="5.7" width="2.1" height="1.7" fill="#d4506e"/><rect x="1.1" y="7.8" width="2.1" height="1.7" fill="#c7d6f2"/><rect x="3.6" y="7.8" width="2.1" height="1.7" fill="#eef2fb"/><rect x="6.1" y="7.8" width="2.1" height="1.7" fill="#d4506e"/><rect x="8.6" y="7.8" width="2.1" height="1.7" fill="#e58a9e"/></svg>
<div class="a" style="left:798.4px;top:104px;width:66px;height:33.4px;background:#f4f4f4;"></div>
<div class="a" style="left:797.2px;top:104px;width:1.4px;height:34px;background:#a2a2a2;"></div>
<div class="a" style="left:802.4px;top:106.6px;width:57.4px;height:17.4px;background:linear-gradient(#f1f6fa,#e4ebf2 50%,#d6dee8);border:1px solid #5f95a8;border-radius:2px;box-shadow:0 0 0 1.2px #a9e3f5 inset"></div>
<div class="t" style="left:807px;top:108px;font-size:9.3px;color:#1e1e1e;transform:translate(0.10px,0.70px) scaleX(0.9429);">View Report</div>
<div class="a" style="left:498px;top:139.4px;width:26.8px;height:4.2px;background:#a4a4a4;"></div>
<svg style="left:508.8px;top:140.4px" width="5" height="2.6" viewBox="0 0 5 2.6"><path d="M0 2.6L2.5 0L5 2.6Z" fill="#e8e8e8"/></svg>
<svg style="left:161.8px;top:148.4px" width="7.4" height="10" viewBox="0 0 7.4 10"><rect x="0.2" y="0.4" width="1.7" height="9" fill="#aab0c0"/><path d="M7 0.6V9.2L2.4 4.9Z" fill="#aab0c0"/></svg>
<svg style="left:179.6px;top:148.8px" width="5.4" height="9.2" viewBox="0 0 5.4 9.2"><path d="M5 0.4V8.8L0.4 4.6Z" fill="#aab0c0"/></svg>
<div class="a" style="left:193.6px;top:145.2px;width:30.6px;height:16.4px;background:#ffffff;"></div>
<div class="t" style="left:195px;top:147px;font-size:9.3px;color:#1e1e1e;transform:translate(0.90px,0.00px) scaleX(0.8121);">1</div>
<div class="t" style="left:226px;top:147px;font-size:9.3px;color:#1e1e1e;transform:translate(0.90px,0.00px) scaleX(1.0302);">of</div>
<div class="t" style="left:239px;top:147px;font-size:9.3px;color:#1e1e1e;transform:translate(0.50px,0.00px) scaleX(0.8121);">1</div>
<svg style="left:252.6px;top:148.8px" width="5.4" height="9.2" viewBox="0 0 5.4 9.2"><path d="M0.4 0.4V8.8L5 4.6Z" fill="#aab0c0"/></svg>
<svg style="left:268.6px;top:148.4px" width="7.4" height="10" viewBox="0 0 7.4 10"><rect x="5.5" y="0.4" width="1.7" height="9" fill="#aab0c0"/><path d="M0.4 0.6V9.2L5 4.9Z" fill="#aab0c0"/></svg>
<div class="a" style="left:285.6px;top:147.6px;width:1px;height:12.4px;background:#b4bacb;"></div>
<svg style="left:291.6px;top:149.6px" width="7.2" height="7.6" viewBox="0 0 7.2 7.6"><path d="M0.2 3.8L3.8 0.4V2.4H7V5.2H3.8V7.2Z" fill="#b3b6c0"/></svg>
<svg style="left:306px;top:147.4px" width="12.4" height="12.4" viewBox="0 0 12.4 12.4"><circle cx="6.2" cy="6.2" r="5.6" fill="#d8dae0" stroke="#c2c5cd" stroke-width="0.9"/><path d="M4 4L8.4 8.4M8.4 4L4 8.4" stroke="#f0f1f4" stroke-width="1.5"/></svg>
<svg style="left:323.6px;top:147.4px" width="12.4" height="12.4" viewBox="0 0 12.4 12.4"><circle cx="6.2" cy="6.2" r="5.6" fill="#e9f6ee" stroke="#6fa0c8" stroke-width="1"/><path d="M3.4 5.6C3.8 3.6 6.6 2.8 8 4.4" fill="none" stroke="#2f9b4a" stroke-width="1.4"/><path d="M8.8 2.8V5.4H6.4Z" fill="#2f9b4a"/><path d="M9 6.8C8.6 8.8 5.8 9.6 4.4 8" fill="none" stroke="#2f9b4a" stroke-width="1.4"/><path d="M3.6 9.6V7H6Z" fill="#2f9b4a"/></svg>
<div class="a" style="left:341.2px;top:147.6px;width:1px;height:12.4px;background:#b4bacb;"></div>
<svg style="left:345px;top:146.8px" width="12.8" height="12.8" viewBox="0 0 12.8 12.8"><path d="M3.6 0.6H9.2V4.6H3.6Z" fill="#fcfcfd" stroke="#6a6e78" stroke-width="0.8"/><path d="M1.8 4.2H11L12.4 6V9.6H0.4V6Z" fill="#8a8f9a" stroke="#555a64" stroke-width="0.8"/><path d="M0.8 7.4H12" stroke="#b9bdc6" stroke-width="0.9"/><path d="M3.2 8.6H9.6L10.4 12.2H2.4Z" fill="#f6f6f8" stroke="#666a74" stroke-width="0.8"/></svg>
<svg style="left:362.8px;top:147px" width="12" height="11.8" viewBox="0 0 12 11.8"><defs><linearGradient id="lg1" x1="0" y1="0" x2="1" y2="1"><stop offset="0" stop-color="#f8faf8"/><stop offset="1" stop-color="#cfd4d0"/></linearGradient></defs><rect x="0.6" y="0.6" width="10.8" height="10.6" rx="0.8" fill="url(#lg1)" stroke="#56665b" stroke-width="1.2"/><path d="M10.6 1V11M1 10.8H11" stroke="#3f4d44" stroke-width="1.6"/></svg>
<svg style="left:380.2px;top:148.2px" width="11.6" height="9.6" viewBox="0 0 11.6 9.6"><path d="M0.8 0.8H4.8V7.2L2.2 7.6L0.8 8.8Z" fill="#fdfdfd" stroke="#4e525c" stroke-width="0.9"/><path d="M5.8 0.8H10.6V8.4H5.8Z" fill="#fdfdfd" stroke="#4e525c" stroke-width="0.9"/><path d="M10.6 0.8V8.6M5.6 8.6H11" stroke="#3c4049" stroke-width="1.4"/></svg>
<svg style="left:397px;top:147.8px" width="11.4" height="11.4" viewBox="0 0 11.4 11.4"><path d="M0.4 0.4H7.8L8.8 1.4V8.8H0.4Z" fill="#4468cc" stroke="#2e4aa0" stroke-width="0.7"/><rect x="2.2" y="0.6" width="4.6" height="3.2" fill="#f2f4fb"/><rect x="1.8" y="5.6" width="4.4" height="3.2" fill="#93a4dc"/><path d="M8.4 5V9" stroke="#2c9a3e" stroke-width="2.2"/><path d="M5.4 8H11.4L8.4 11.4Z" fill="#2c9a3e"/></svg>
<svg style="left:410.2px;top:153.05px" width="3.8" height="1.9" viewBox="0 0 3.8 1.9"><path d="M0 0H3.8L1.9 1.9Z" fill="#1e1e1e"/></svg>
<div class="a" style="left:420px;top:147.6px;width:1px;height:12.4px;background:#b4bacb;"></div>
<div class="a" style="left:427.5px;top:145.2px;width:74px;height:16.4px;background:#ffffff;"></div>
<div class="t" style="left:430px;top:147px;font-size:9.3px;color:#1e1e1e;transform:translate(0.50px,0.00px) scaleX(0.9377);">100%</div>
<div class="a" style="left:501.5px;top:146.6px;width:8.6px;height:15.4px;background:linear-gradient(#f6fbfe 0%,#cfe9f7 35%,#a6d6ee 70%,#9ccfe9 100%);border-radius:1px"></div>
<svg style="left:503.8px;top:152.7px" width="3.6" height="1.8" viewBox="0 0 3.6 1.8"><path d="M0 0H3.6L1.8 1.8Z" fill="#111111"/></svg>
<div class="a" style="left:518.5px;top:145.2px;width:56.8px;height:16.4px;background:#ffffff;"></div>
<div class="a" style="left:160.2px;top:161.9px;width:704.2px;height:1px;background:#c4c6d0;"></div>
<div class="t" style="left:581px;top:146px;font-size:9.3px;color:#8e8e94;transform:translate(0.50px,0.90px) scaleX(0.9782);">Find</div>
<div class="a" style="left:606px;top:149.4px;width:0.9px;height:8.6px;background:#aeb2be;"></div>
<div class="t" style="left:614px;top:146px;font-size:9.3px;color:#8e8e94;transform:translate(0.30px,0.90px) scaleX(0.9359);">Next</div>
<!-- ===== report chart ===== -->
<div class="a" style="left:166.2px;top:169px;width:455.4px;height:178.8px;background:#ffffff;border:1px solid #dadada"></div>
<div class="t" style="left:346px;top:177px;font-size:10.2px;color:#080808;font-weight:700;transform:translate(0.50px,0.20px) scaleX(0.9521);-webkit-text-stroke:0.14px;">Registratioin Details</div>
<div class="a" style="left:187px;top:201px;width:16px;height:6.6px;background:#418cf0;"></div>
<div class="t" style="left:206px;top:198px;font-size:8.2px;color:#111111;transform:translate(0.60px,0.70px) scaleX(1.0382);-webkit-text-stroke:0.14px;">Registration Count</div>
<div class="a" style="left:213.6px;top:292.75px;width:394.4px;height:1px;background:#e4e4e4;"></div>
<div class="a" style="left:213.6px;top:275.8px;width:394.4px;height:1px;background:#e4e4e4;"></div>
<div class="a" style="left:213.6px;top:258.85px;width:394.4px;height:1px;background:#e4e4e4;"></div>
<div class="a" style="left:213.6px;top:241.9px;width:394.4px;height:1px;background:#e4e4e4;"></div>
<div class="a" style="left:213.6px;top:224.95px;width:394.4px;height:1px;background:#e4e4e4;"></div>
<div class="a" style="left:235px;top:293.25px;width:28.1px;height:16.95px;background:#418cf0;"></div>
<div class="a" style="left:270.74px;top:276.3px;width:28.1px;height:33.9px;background:#418cf0;"></div>
<div class="a" style="left:306.48px;top:259.35px;width:28.1px;height:50.85px;background:#418cf0;"></div>
<div class="a" style="left:342.22px;top:242.4px;width:28.1px;height:67.8px;background:#418cf0;"></div>
<div class="a" style="left:377.96px;top:293.25px;width:28.1px;height:16.95px;background:#418cf0;"></div>
<div class="a" style="left:413.7px;top:293.25px;width:28.1px;height:16.95px;background:#418cf0;"></div>
<div class="a" style="left:449.44px;top:293.25px;width:28.1px;height:16.95px;background:#418cf0;"></div>
<div class="a" style="left:485.18px;top:276.3px;width:28.1px;height:33.9px;background:#418cf0;"></div>
<div class="a" style="left:520.92px;top:293.25px;width:28.1px;height:16.95px;background:#418cf0;"></div>
<div class="a" style="left:556.66px;top:242.4px;width:28.1px;height:67.8px;background:#418cf0;"></div>
<div class="a" style="left:212.9px;top:225px;width:1.1px;height:85.8px;background:#5a5a5a;"></div>
<div class="a" style="left:212.9px;top:309.7px;width:395px;height:1.1px;background:#5a5a5a;"></div>
<div class="a" style="left:210px;top:309.7px;width:3.4px;height:1px;background:#5a5a5a;"></div>
<div class="t" style="left:201px;top:304px;font-size:10.4px;color:#080808;transform:translate(0.90px,0.90px) scaleX(1.0378);-webkit-text-stroke:0.14px;">0</div>
<div class="a" style="left:210px;top:292.75px;width:3.4px;height:1px;background:#5a5a5a;"></div>
<div class="t" style="left:201px;top:287px;font-size:10.4px;color:#080808;transform:translate(0.90px,0.95px) scaleX(1.0378);-webkit-text-stroke:0.14px;">1</div>
<div class="a" style="left:210px;top:275.8px;width:3.4px;height:1px;background:#5a5a5a;"></div>
<div class="t" style="left:201px;top:271px;font-size:10.4px;color:#080808;transform:translate(0.90px,0.00px) scaleX(1.0378);-webkit-text-stroke:0.14px;">2</div>
<div class="a" style="left:210px;top:258.85px;width:3.4px;height:1px;background:#5a5a5a;"></div>
<div class="t" style="left:201px;top:254px;font-size:10.4px;color:#080808;transform:translate(0.90px,0.05px) scaleX(1.0378);-webkit-text-stroke:0.14px;">3</div>
<div class="a" style="left:210px;top:241.9px;width:3.4px;height:1px;background:#5a5a5a;"></div>
<div class="t" style="left:201px;top:237px;font-size:10.4px;color:#080808;transform:translate(0.90px,0.10px) scaleX(1.0378);-webkit-text-stroke:0.14px;">4</div>
<div class="a" style="left:210px;top:224.95px;width:3.4px;height:1px;background:#5a5a5a;"></div>
<div class="t" style="left:201px;top:220px;font-size:10.4px;color:#080808;transform:translate(0.90px,0.15px) scaleX(1.0378);-webkit-text-stroke:0.14px;">5</div>
<div class="a" style="left:284.29px;top:310.2px;width:1px;height:2.6px;background:#5a5a5a;"></div>
<div class="t" style="left:260px;top:315px;font-size:10.4px;color:#080808;transform:translate(0.89px,0.50px) scaleX(0.9209);-webkit-text-stroke:0.14px;">02/06/2015</div>
<div class="a" style="left:355.77px;top:310.2px;width:1px;height:2.6px;background:#5a5a5a;"></div>
<div class="t" style="left:332px;top:315px;font-size:10.4px;color:#080808;transform:translate(0.37px,0.50px) scaleX(0.9209);-webkit-text-stroke:0.14px;">04/06/2015</div>
<div class="a" style="left:427.25px;top:310.2px;width:1px;height:2.6px;background:#5a5a5a;"></div>
<div class="t" style="left:403px;top:315px;font-size:10.4px;color:#080808;transform:translate(0.85px,0.50px) scaleX(0.9209);-webkit-text-stroke:0.14px;">06/06/2015</div>
<div class="a" style="left:498.73px;top:310.2px;width:1px;height:2.6px;background:#5a5a5a;"></div>
<div class="t" style="left:475px;top:315px;font-size:10.4px;color:#080808;transform:translate(0.33px,0.50px) scaleX(0.9209);-webkit-text-stroke:0.14px;">08/06/2015</div>
<div class="a" style="left:570.21px;top:310.2px;width:1px;height:2.6px;background:#5a5a5a;"></div>
<div class="t" style="left:546px;top:315px;font-size:10.4px;color:#080808;transform:translate(0.81px,0.50px) scaleX(0.9209);-webkit-text-stroke:0.14px;">10/06/2015</div>
<div class="t" style="left:377px;top:328px;font-size:8.2px;color:#111111;transform:translate(0.20px,0.40px) scaleX(1.0638);-webkit-text-stroke:0.14px;">Registration Date</div>
<div class="a" style="left:192.1px;top:267.6px;width:0;height:0"><div class="t" style="left:-22.2px;top:-7px;width:44.4px;text-align:center;font-size:8.2px;color:#111111;transform:rotate(-90deg) scaleX(1.065);transform-origin:50% 50%;letter-spacing:0;-webkit-text-stroke:0.14px">User Count</div></div>
<!-- ===== Properties tool window ===== -->
<div class="a" style="left:870px;top:79.4px;width:130.4px;height:424.7px;background:#f6f6f6;"></div>
<div class="t" style="left:872px;top:64px;font-size:9.3px;color:#3e3e42;transform:translate(0.40px,0.80px) scaleX(0.9463);">Properties</div>
<div class="a" style="left:918px;top:69px;width:43.4px;height:5.4px;background-image:radial-gradient(circle,#c0c0c8 0.55px,transparent 0.8px),radial-gradient(circle,#c0c0c8 0.55px,transparent 0.8px);background-size:3px 3px;background-position:0 0,1.5px 1.5px"></div>
<svg style="left:964.9px;top:70px" width="5.6" height="2.8" viewBox="0 0 5.6 2.8"><path d="M0 0H5.6L2.8 2.8Z" fill="#1e1e1e"/></svg>
<svg style="left:977.4px;top:67.6px" width="5" height="7.8" viewBox="0 0 5 7.8"><rect x="1.1" y="0.4" width="2.8" height="4" fill="#f0f0f2" stroke="#1e1e1e" stroke-width="0.9"/><rect x="3" y="0.4" width="1" height="4" fill="#1e1e1e"/><path d="M0 4.6H5" stroke="#1e1e1e" stroke-width="0.9"/><path d="M2.5 4.8V7.6" stroke="#1e1e1e" stroke-width="0.9"/></svg>
<svg style="left:989.2px;top:68.1px" width="7" height="6.4" viewBox="0 0 7 6.4"><path d="M0.4 0.3L6.6 6.1M6.6 0.3L0.4 6.1" stroke="#1e1e1e" stroke-width="1.3"/></svg>
<div class="a" style="left:870px;top:79.4px;width:130.4px;height:18px;background:#fdfdfd;"></div>
<svg style="left:994px;top:87.7px" width="3.6" height="1.8" viewBox="0 0 3.6 1.8"><path d="M0 0H3.6L1.8 1.8Z" fill="#55555c"/></svg>
<div class="a" style="left:870px;top:97.4px;width:130.4px;height:19.6px;background:#eeeef2;"></div>
<svg style="left:874.4px;top:101.6px" width="11.2" height="10.6" viewBox="0 0 11.2 10.6"><rect x="0.5" y="0.5" width="3.2" height="3.2" fill="#f5f5f5" stroke="#1e1e1e" stroke-width="1"/><rect x="0.5" y="6.5" width="3.2" height="3.2" fill="#f5f5f5" stroke="#1e1e1e" stroke-width="1"/><path d="M5.4 0.8H7.6M5.4 2.6H7.6M5.4 4.4H7.6M5.4 6.8H7.6M5.4 8.6H7.6" stroke="#8c8c93" stroke-width="1"/><path d="M9.2 0.4V5M9.2 6.4V9.2" stroke="#a5a5ac" stroke-width="1.2"/><path d="M5.4 10.2H10.4" stroke="#a5a5ac" stroke-width="0.8"/></svg>
<div class="a" style="left:888.8px;top:98.2px;width:17.8px;height:17.2px;background:#e6eef9;border:1px solid #7fb2e6"></div>
<svg style="left:892.6px;top:102px" width="10.6" height="9.8" viewBox="0 0 11.6 10.6"><rect x="0.4" y="0.4" width="4.4" height="4.6" fill="#2b2b30"/><path d="M1.6 4L2.6 1.4L3.6 4M2 3.2H3.2" fill="none" stroke="#f0f0f2" stroke-width="0.7"/><path d="M0.6 6.4H4.2L0.8 9.8H4.6" fill="none" stroke="#2b2b30" stroke-width="1.2"/><path d="M8.6 0.6V8.6" stroke="#2b2b30" stroke-width="1.4"/><path d="M6 6.2L8.6 9.2L11.2 6.2" fill="none" stroke="#2b2b30" stroke-width="1.4"/></svg>
<svg style="left:915px;top:102.6px" width="8.8" height="8.8" viewBox="0 0 8.8 8.8"><path d="M1.1 7.7L4.6 4.2" stroke="#a3a3aa" stroke-width="2.5" stroke-linecap="round"/><path d="M6.2 0.2C4.3 0 3 1.6 3.6 3.3L5.5 5.2C7.2 5.8 8.8 4.4 8.5 2.6L6.8 3.9L4.9 2Z" fill="#a3a3aa"/></svg>
<div class="a" style="left:1019.2px;top:63.2px;width:4.8px;height:70px;background:#c9cbdc;"></div>
<div class="a" style="left:1011.6px;top:63.4px;width:0;height:0"><div class="t vt" style="left:0;top:-7px;font-size:9.1px;color:#3e3e42;-webkit-text-stroke:0.1px;transform-origin:0 50%;transform:rotate(90deg) scaleX(0.9768)">Solution Explorer</div></div>
<div class="a" style="left:1019.2px;top:138px;width:4.8px;height:58.6px;background:#c9cbdc;"></div>
<div class="a" style="left:1011.6px;top:139.8px;width:0;height:0"><div class="t vt" style="left:0;top:-7px;font-size:9.1px;color:#3e3e42;-webkit-text-stroke:0.1px;transform-origin:0 50%;transform:rotate(90deg) scaleX(0.9559)">Team Explorer</div></div>
<div class="a" style="left:1019.2px;top:202.6px;width:4.8px;height:44px;background:#c9cbdc;"></div>
<div class="a" style="left:1011.6px;top:204.4px;width:0;height:0"><div class="t vt" style="left:0;top:-7px;font-size:9.1px;color:#3e3e42;-webkit-text-stroke:0.1px;transform-origin:0 50%;transform:rotate(90deg) scaleX(0.9111)">Class View</div></div>
<!-- ===== bottom tabs + status bar ===== -->
<div class="t" style="left:4px;top:508px;font-size:9.3px;color:#3e3e42;transform:translate(0.60px,0.20px) scaleX(1.0314);">Output</div>
<div class="a" style="left:4.9px;top:523px;width:28px;height:4.6px;background:#cccedb;"></div>
<div class="t" style="left:42px;top:508px;font-size:9.3px;color:#3e3e42;transform:translate(0.20px,0.20px) scaleX(0.9336);">Find Symbol Results</div>
<div class="a" style="left:42.5px;top:523px;width:78.8px;height:4.6px;background:#cccedb;"></div>
<div class="t" style="left:130px;top:508px;font-size:9.3px;color:#3e3e42;transform:translate(0.70px,0.20px) scaleX(0.9147);">Error List</div>
<div class="a" style="left:131px;top:523px;width:33.7px;height:4.6px;background:#cccedb;"></div>
<div class="a" style="left:0px;top:527.6px;width:1024px;height:17.4px;background:#007acc;"></div>
<div class="t" style="left:3px;top:529px;font-size:9.3px;color:#ffffff;transform:translate(0.30px,0.70px) scaleX(0.8893);">Ready</div>
<div class="a" style="left:982px;top:511.3px;width:30px;height:29.2px;background:linear-gradient(#f4f8fd,#e0edfc);border:1px solid #f2f7fe;border-top-color:#71767f;border-right-color:#8a8f98;box-shadow:0 0 2px rgba(255,255,255,0.7)"></div>
<div class="a" style="left:985.2px;top:514.6px;width:23.6px;height:23px;background:linear-gradient(#a9c8f2 0%,#84aee8 30%,#6d9be2 52%,#3f7dd8 56%,#2f70d2 100%);border:1px solid #6f95d0"></div>
<svg style="left:992.2px;top:520.4px" width="9.6" height="10.4" viewBox="0 0 9.6 10.4"><path d="M2.6 0.4H7V4.6H9.4L4.8 10L0.2 4.6H2.6Z" fill="#eef4fd" fill-opacity="0.8"/></svg>
</body></html>
